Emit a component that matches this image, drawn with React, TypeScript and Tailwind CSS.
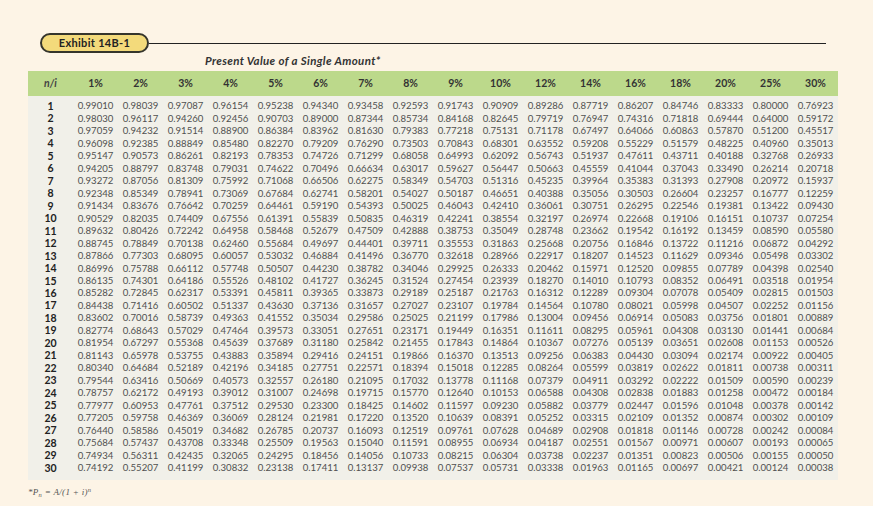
import React from "react"

const rates = [1, 2, 3, 4, 5, 6, 7, 8, 9, 10, 12, 14, 16, 18, 20, 25, 30]
const periods = Array.from({ length: 30 }, (_, i) => i + 1)

function pv(rate: number, n: number) {
  return (1 / Math.pow(1 + rate / 100, n)).toFixed(5)
}

export default function App() {
  return (
    <div
      className="w-[873px] h-[506px] bg-[#fdf4e6] overflow-hidden flex flex-col"
      style={{ fontFamily: "Lato, 'Open Sans', sans-serif" }}
    >
      <div className="flex items-center pl-[40px] pr-[47px] pt-[33px]">
        <div className="h-[20px] w-[109px] rounded-full border-2 border-[#35352c] bg-[#f3da7b] flex items-center justify-center">
          <span className="text-[11px] font-bold text-[#222] tracking-[0.3px]">Exhibit 14B-1</span>
        </div>
        <div className="flex-1 h-px bg-[#222]" />
      </div>

      <div className="pl-[205px] mt-[-1px] h-[18px] flex items-center">
        <span className="text-[11.5px] font-bold italic text-[#333] tracking-[0.35px]">
          Present Value of a Single Amount*
        </span>
      </div>

      <div className="ml-[28px] w-[810px] mt-[1px]">
        <div className="grid grid-cols-[repeat(18,45px)] h-[25px] bg-[#bcd98b] items-end pb-[4px]">
          <div className="text-center text-[10.5px] font-bold italic text-[#444]">n/i</div>
          {rates.map((r) => (
            <div key={r} className="text-center text-[10.5px] font-bold text-[#333]">
              {r}%
            </div>
          ))}
        </div>
        <div className="bg-[#f1f0e9] pt-[4px] pb-[6px]">
          {periods.map((n) => (
            <div key={n} className="grid grid-cols-[repeat(18,45px)] h-[12.48px] items-center">
              <div className="text-center text-[10.5px] font-bold text-[#222] leading-none">{n}</div>
              {rates.map((r) => (
                <div key={r} className="text-center text-[9.6px] text-[#505050] leading-none">
                  {pv(r, n)}
                </div>
              ))}
            </div>
          ))}
        </div>
      </div>

      <div
        className="ml-[28px] mt-[6px] text-[9px] italic text-[#555] tracking-[0.3px]"
        style={{ fontFamily: "'Liberation Serif', serif" }}
      >
        *P<sub className="text-[6.5px]">n</sub> = A/(1 + i)<sup className="text-[6.5px]">n</sup>
      </div>
    </div>
  )
}
